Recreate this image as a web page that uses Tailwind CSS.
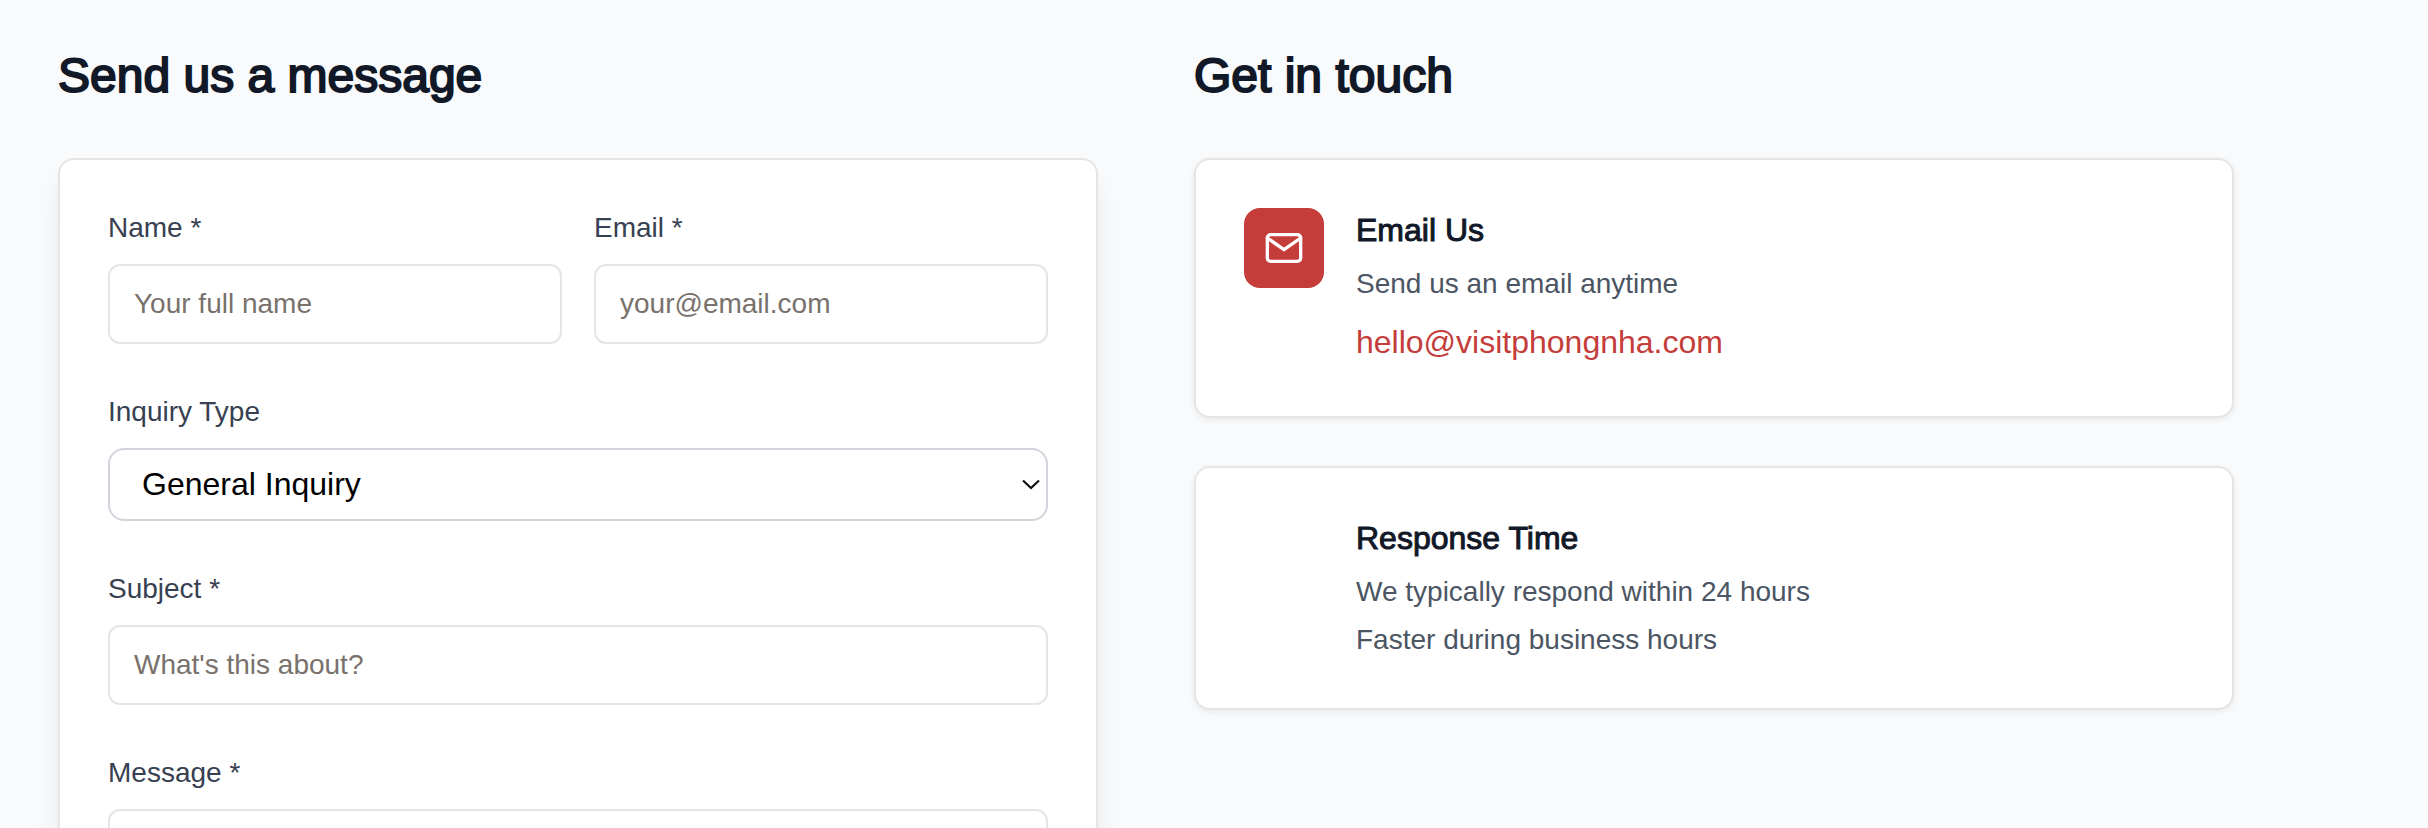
<!DOCTYPE html>
<html lang="en">
<head>
<meta charset="utf-8">
<meta name="viewport" content="width=device-width, initial-scale=1">
<title>Contact</title>
<script src="https://cdn.jsdelivr.net/npm/@tailwindcss/browser@4"></script>
</head>
<body class="h-screen overflow-hidden bg-[#f9fafc] font-['Liberation_Sans',Arial,sans-serif] text-[#111827]">
<main class="grid grid-cols-2 items-start gap-24 pt-[46px] pr-[194px] pl-[58px]">
  <section>
    <h2 class="mb-[52px] text-[48px] leading-[60px] [-webkit-text-stroke:2px_#111827]">Send us a message</h2>
    <form class="flex flex-col gap-12 rounded-2xl border-2 border-[#e5e5e5] bg-white p-12 shadow-[0_20px_30px_-6px_rgba(0,0,0,0.1),0_8px_12px_-8px_rgba(0,0,0,0.1)]">
      <div class="grid grid-cols-2 gap-8">
        <div class="flex flex-col gap-4">
          <label for="name" class="text-[28px] leading-[40px] text-[#374151]">Name *</label>
          <input id="name" type="text" placeholder="Your full name" class="h-20 w-full rounded-xl border-2 border-[#e5e5e5] bg-white px-6 text-[28px] placeholder:text-[#78716c]">
        </div>
        <div class="flex flex-col gap-4">
          <label for="email" class="text-[28px] leading-[40px] text-[#374151]">Email *</label>
          <input id="email" type="email" placeholder="your@email.com" class="h-20 w-full rounded-xl border-2 border-[#e5e5e5] bg-white px-6 text-[28px] placeholder:text-[#78716c]">
        </div>
      </div>
      <div class="flex flex-col gap-4">
        <label for="type" class="text-[28px] leading-[40px] text-[#374151]">Inquiry Type</label>
        <div class="relative">
          <select id="type" class="block h-[73px] w-full appearance-none rounded-2xl border-2 border-[#d1d5db] bg-white px-8 pb-0.5 text-[32px] text-black">
            <option>General Inquiry</option>
          </select>
          <svg class="pointer-events-none absolute top-1/2 right-2 h-3 w-[18px] -translate-y-1/2" viewBox="0 0 18 12" fill="none" stroke="#111" stroke-width="2.2" aria-hidden="true"><path d="M1 1.5l8 7.5L17 1.5"/></svg>
        </div>
      </div>
      <div class="flex flex-col gap-4">
        <label for="subject" class="text-[28px] leading-[40px] text-[#374151]">Subject *</label>
        <input id="subject" type="text" placeholder="What's this about?" class="h-20 w-full rounded-xl border-2 border-[#e5e5e5] bg-white px-6 text-[28px] placeholder:text-[#78716c]">
      </div>
      <div class="flex flex-col gap-4">
        <label for="message" class="text-[28px] leading-[40px] text-[#374151]">Message *</label>
        <textarea id="message" rows="6" class="w-full resize-none rounded-xl border-2 border-[#e5e5e5] bg-white px-6 py-4 text-[28px]"></textarea>
      </div>
    </form>
  </section>

  <section>
    <h2 class="mb-[52px] text-[48px] leading-[60px] [-webkit-text-stroke:2px_#111827]">Get in touch</h2>
    <div class="flex flex-col gap-12">
      <article class="flex items-start gap-8 rounded-2xl border-2 border-[#e5e5e5] bg-white px-12 pt-12 pb-11 shadow-[0_2px_6px_rgba(0,0,0,0.07)]">
        <div class="flex size-20 shrink-0 items-center justify-center rounded-2xl bg-[#c43d3a]">
          <svg class="size-10" viewBox="0 0 24 24" fill="none" stroke="#fff" stroke-width="2" stroke-linecap="round" stroke-linejoin="round" aria-hidden="true"><path d="M4 4h16c1.1 0 2 .9 2 2v12c0 1.1-.9 2-2 2H4c-1.1 0-2-.9-2-2V6c0-1.1.9-2 2-2z"/><path d="M22 6l-10 7L2 6"/></svg>
        </div>
        <div>
          <h3 class="mb-2 text-[32px] leading-[44px] [-webkit-text-stroke:1px_#111827]">Email Us</h3>
          <p class="text-[28px] leading-[48px] text-[#4b5563]">Send us an email anytime</p>
          <a href="mailto:hello@visitphongnha.com" class="mt-1.5 mb-0.5 block text-[32px] leading-[56px] text-[#c43d3a]">hello@visitphongnha.com</a>
        </div>
      </article>
      <article class="flex items-start gap-8 rounded-2xl border-2 border-[#e5e5e5] bg-white px-12 pt-12 pb-11 shadow-[0_2px_6px_rgba(0,0,0,0.07)]">
        <div class="size-20 shrink-0 rounded-2xl"></div>
        <div>
          <h3 class="mb-2 text-[32px] leading-[44px] [-webkit-text-stroke:1px_#111827]">Response Time</h3>
          <p class="text-[28px] leading-[48px] text-[#4b5563]">We typically respond within 24 hours</p>
          <p class="text-[28px] leading-[48px] text-[#4b5563]">Faster during business hours</p>
        </div>
      </article>
    </div>
  </section>
</main>
</body>
</html>
